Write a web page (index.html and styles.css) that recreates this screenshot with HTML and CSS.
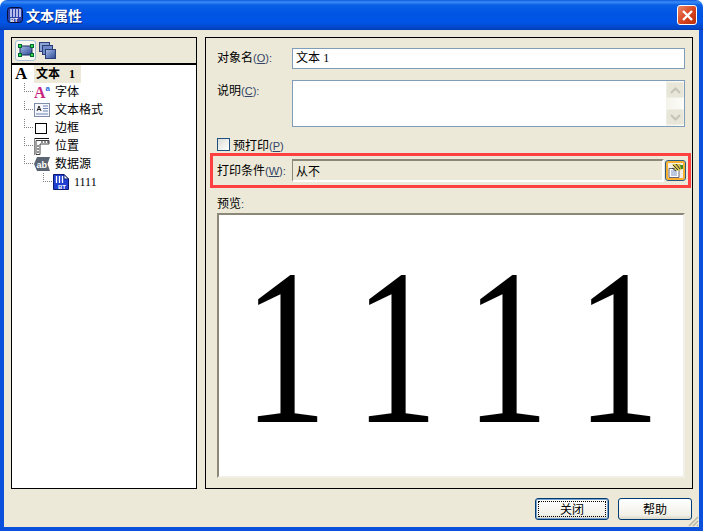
FILE: index.html
```html
<!DOCTYPE html>
<html lang="zh-CN">
<head>
    <meta charset="UTF-8">
    <title>文本属性</title>
    <link rel="stylesheet" href="styles.css">
</head>
<body>
<div class="window">
    <div class="titlebar">
        <svg class="app-icon" width="16" height="16" viewBox="0 0 16 16">
            <rect x="0.5" y="0.5" width="15" height="15" rx="3" fill="#2a3fa8" stroke="#0a0f3a"/>
            <path d="M4 2v8M7 2v8M10 2v8M13 2v8" stroke="#dfe4ff" stroke-width="1.5"/>
            <text x="3" y="15" class="bt-text">BT</text>
        </svg>
        <span class="title-text">文本属性</span>
        <div class="close-btn">
            <svg width="13" height="13" viewBox="0 0 13 13"><path d="M2 2l9 9M11 2l-9 9" stroke="#fff" stroke-width="2.4"/></svg>
        </div>
    </div>

    <div class="client">
        <div class="panels">
            <!-- arbol de propiedades -->
            <div class="panel tree-panel">
                <div class="toolbar">
                    <div class="tool-btn active">
                        <svg width="16" height="13" viewBox="0 0 16 13">
                            <defs>
                                <linearGradient id="blueGrad" x1="0" y1="0" x2="1" y2="1">
                                    <stop offset="0" stop-color="#a9bde6"/>
                                    <stop offset="1" stop-color="#2b4a96"/>
                                </linearGradient>
                            </defs>
                            <rect x="2" y="2" width="12" height="9" fill="url(#blueGrad)" stroke="#1a2a5a"/>
                            <rect x="0.5" y="0.5" width="3" height="3" fill="#2fe04a" stroke="#063"/>
                            <rect x="12.500" y="0.5" width="3" height="3" fill="#2fe04a" stroke="#063"/>
                            <rect x="0.5" y="9.500" width="3" height="3" fill="#2fe04a" stroke="#063"/>
                            <rect x="12.500" y="9.500" width="3" height="3" fill="#2fe04a" stroke="#063"/>
                        </svg>
                    </div>
                    <div class="tool-btn">
                        <svg width="17" height="17" viewBox="0 0 17 17">
                            <rect x="0.5" y="0.5" width="10" height="9" fill="#8ea4d6" stroke="#2a3f78"/>
                            <rect x="3.5" y="3.5" width="10" height="9" fill="#6f8ac6" stroke="#2a3f78"/>
                            <rect x="6.5" y="7.5" width="10" height="9" fill="url(#blueGrad)" stroke="#2a3f78"/>
                        </svg>
                    </div>
                </div>
                <div class="tree">
                    <div class="node root">
                        <span class="root-icon">A</span>
                        <span class="node-label selected">文本<span class="num root-num">1</span></span>
                    </div>
                    <div class="node">
                        <span class="elbow"></span>
                        <svg class="node-icon" width="16" height="16" viewBox="0 0 16 16">
                            <text x="0" y="14" class="font-big">A</text>
                            <text x="11.600" y="7" class="font-small">a</text>
                        </svg>
                        <span class="node-label">字体</span>
                    </div>
                    <div class="node">
                        <span class="elbow"></span>
                        <svg class="node-icon" width="16" height="14" viewBox="0 0 16 14">
                            <rect x="0.5" y="0.5" width="15" height="13" fill="#f4f6fb" stroke="#7f8da8"/>
                            <path d="M2 11h12M9 3h5M9 5.5h5M9 8h5" stroke="#6d84b4"/>
                            <path d="M3 8l2-5 2 5M4 6.5h2" stroke="#222" fill="none"/>
                        </svg>
                        <span class="node-label">文本格式</span>
                    </div>
                    <div class="node">
                        <span class="elbow"></span>
                        <svg class="node-icon" width="16" height="13" viewBox="0 0 16 13">
                            <rect x="1.500" y="1.500" width="11" height="10" fill="#fff" stroke="#000"/>
                        </svg>
                        <span class="node-label">边框</span>
                    </div>
                    <div class="node">
                        <span class="elbow"></span>
                        <svg class="node-icon" width="16" height="17" viewBox="0 0 16 17">
                            <path d="M0 0.5h15" stroke="#111"/>
                            <path d="M0.5 0v17" stroke="#8a8a8a"/>
                            <path d="M2 2.500h13v3.500h-9v10.500h-4z" fill="#fff" stroke="#444"/>
                            <path d="M8 3v2M11 3v2M14 3v2M3 8h2M3 11h2M3 14h2" stroke="#222"/>
                        </svg>
                        <span class="node-label">位置</span>
                    </div>
                    <div class="node">
                        <span class="elbow"></span>
                        <svg class="node-icon" width="16" height="14" viewBox="0 0 16 14">
                            <path d="M3 0H16L13.5 7 16 14H3L0 7Z" fill="#5a6472"/>
                            <text x="2.5" y="11" class="ab-text">ab</text>
                        </svg>
                        <span class="node-label">数据源</span>
                    </div>
                    <div class="node sub">
                        <span class="elbow"></span>
                        <svg class="node-icon" width="16" height="16" viewBox="0 0 16 16">
                            <path d="M0.5 0.5H11L15.5 5V15.5H0.5Z" fill="#1f3fd0" stroke="#0b1a70"/>
                            <path d="M11 0.5V5H15.5Z" fill="#fff" stroke="#0b1a70"/>
                            <path d="M3.5 2v7M6.5 2v7M9.5 2v7" stroke="#fff" stroke-width="1.3"/>
                            <text x="5" y="15" class="bt-text">BT</text>
                        </svg>
                        <span class="node-label num">1111</span>
                    </div>
                </div>
            </div>

            <!-- propiedades -->
            <div class="panel props-panel">
                <div class="form-row name-row">
                    <label class="field-label">对象名<span class="acc">(<u>O</u>):</span></label>
                    <div class="input name-input">文本 <span class="num">1</span></div>
                </div>
                <div class="form-row memo-row">
                    <label class="field-label memo-label">说明<span class="acc">(<u>C</u>):</span></label>
                    <div class="input memo-input">
                        <div class="scrollbar">
                            <div class="scroll-btn">
                                <svg width="11" height="7" viewBox="0 0 11 7"><path d="M1 6l4.500-4.500L10 6" fill="none" stroke="#c4c4b8" stroke-width="2"/></svg>
                            </div>
                            <div class="scroll-btn">
                                <svg width="11" height="7" viewBox="0 0 11 7"><path d="M1 1l4.500 4.500L10 1" fill="none" stroke="#c4c4b8" stroke-width="2"/></svg>
                            </div>
                        </div>
                    </div>
                </div>
                <div class="check-row">
                    <span class="checkbox"></span>
                    <span>预打印<span class="acc">(<u>P</u>)</span></span>
                </div>
                <div class="condition-box">
                    <label class="field-label cond-label">打印条件<span class="acc">(<u>W</u>):</span></label>
                    <div class="readonly-field">从不</div>
                    <div class="edit-btn">
                        <svg width="17" height="16" viewBox="0 0 17 16">
                            <path d="M2 5.500h10v9H2z" fill="#fff" stroke="#667"/>
                            <path d="M4 8h6M4 10h6M4 12h6" stroke="#7a93c4"/>
                            <path d="M5 1h8l3 3-2 3-5 1z" fill="#d8c24a"/>
                            <path d="M6 2l5 5M9 1l4 5M5 5l4 3" stroke="#333"/>
                            <path d="M13 2h3v4h-2z" fill="#3a8a2e"/>
                        </svg>
                    </div>
                </div>
                <div class="preview-label">预览<span class="acc">:</span></div>
                <div class="preview"><span class="preview-text">1111</span></div>
            </div>
        </div>

        <div class="button-row">
            <div class="btn default"><span class="btn-focus">关闭</span></div>
            <div class="btn"><span class="btn-focus plain">帮助</span></div>
        </div>
        <svg class="grip" width="11" height="11" viewBox="0 0 11 11">
            <path d="M10 1L1 10M10 5L5 10M10 9L9 10" stroke="#b5b2a0" stroke-width="1.4"/>
        </svg>
    </div>
</div>
</body>
</html>
```

FILE: styles.css
```css
html, body {
    margin: 0;
    padding: 0;
}

body {
    width: 703px;
    height: 531px;
    overflow: hidden;
    font-family: "Liberation Sans", "Noto Sans CJK SC", sans-serif;
    font-size: 12px;
    color: #000;
}

.window {
    display: flex;
    flex-direction: column;
    height: 531px;
}

/* barra de titulo */
.titlebar {
    height: 30px;
    flex: none;
    display: flex;
    align-items: center;
    padding: 0 6px 0 7px;
    box-sizing: border-box;
    border-radius: 7px 7px 0 0;
    background: linear-gradient(#0a58e0 0, #3c8cf6 2px, #0a5fe6 5px, #0054e3 14px, #0055e6 22px, #0346c8 28px, #003bb0 30px);
}

.app-icon {
    flex: none;
}

.bt-text {
    font-family: "Liberation Sans", sans-serif;
    font-size: 6px;
    font-weight: bold;
    fill: #fff;
}

.title-text {
    margin-left: 3px;
    flex: 1;
    color: #fff;
    font-size: 14px;
    font-weight: bold;
    text-shadow: 1px 1px 0 #0a2a80;
}

.close-btn {
    width: 20px;
    height: 20px;
    box-sizing: border-box;
    display: flex;
    align-items: center;
    justify-content: center;
    border: 1px solid #fff;
    border-radius: 3px;
    background: linear-gradient(135deg, #e8886a, #d8421e 55%, #b8300f);
}

.client {
    flex: 1;
    position: relative;
    display: flex;
    flex-direction: column;
    background: #ece9d8;
    border: 4px solid #0a50dc;
    border-top: none;
    padding: 7px 6px 0 7px;
    min-height: 0;
}

.panels {
    display: flex;
    gap: 8px;
    height: 452px;
    flex: none;
}

.panel {
    box-sizing: border-box;
    border: 1px solid #000;
}

/* panel izquierdo */
.tree-panel {
    width: 186px;
    display: flex;
    flex-direction: column;
}

.toolbar {
    height: 25px;
    flex: none;
    display: flex;
    align-items: center;
    gap: 3px;
    padding-left: 3px;
    border-bottom: 2px solid #000;
}

.tool-btn {
    display: flex;
    align-items: center;
    justify-content: center;
    height: 21px;
}

.tool-btn.active {
    width: 21px;
    box-sizing: border-box;
    border: 1px solid #a8c0d8;
    border-radius: 3px;
    background: #f8f7f0;
}

.tree {
    flex: 1;
    background: #fff;
}

.node {
    height: 18px;
    display: flex;
    align-items: center;
    padding-left: 12px;
}

.node.root {
    padding-left: 3px;
}

.node.sub {
    padding-left: 31px;
}

.elbow {
    width: 9px;
    height: 9px;
    flex: none;
    align-self: flex-start;
    box-sizing: border-box;
    border-left: 1px dotted #808080;
    border-bottom: 1px dotted #808080;
}

.root-icon {
    width: 19px;
    flex: none;
    font-family: "Liberation Serif", serif;
    font-size: 17px;
    font-weight: bold;
    line-height: 18px;
}

.node-icon {
    width: 16px;
    flex: none;
    margin-left: 1px;
}

.font-big {
    font-family: "Liberation Serif", serif;
    font-size: 16px;
    font-weight: bold;
    fill: #c8257e;
}

.font-small {
    font-family: "Liberation Sans", sans-serif;
    font-size: 8px;
    font-weight: bold;
    fill: #2a6ad8;
}

.ab-text {
    font-family: "Liberation Sans", sans-serif;
    font-size: 9px;
    font-weight: bold;
    fill: #fff;
}

.node-label {
    margin-left: 5px;
    line-height: 18px;
    white-space: nowrap;
}

.node-label.selected {
    margin-left: 0;
    padding: 0 6px 0 2px;
    font-weight: bold;
    background: #ece9d8;
}

.num {
    font-family: "Liberation Serif", serif;
}

.root-num {
    margin-left: 9px;
}

/* panel derecho */
.props-panel {
    width: 488px;
    padding-top: 10px;
}

.form-row {
    display: flex;
    padding-left: 11px;
    padding-right: 7px;
}

.field-label {
    width: 75px;
    flex: none;
    line-height: 20px;
    white-space: nowrap;
}

.acc {
    font-size: 11px;
    color: #334466;
}

.input {
    flex: 1;
    box-sizing: border-box;
    border: 1px solid #7f9db9;
    background: #fff;
}

.name-input {
    height: 21px;
    line-height: 19px;
    padding-left: 3px;
}

.memo-row {
    margin-top: 11px;
}

.memo-label {
    padding-top: 1px;
}

.memo-input {
    height: 47px;
    display: flex;
    justify-content: flex-end;
}

.scrollbar {
    width: 18px;
    display: flex;
    flex-direction: column;
    justify-content: space-between;
    padding: 1px 0;
    box-sizing: border-box;
    background: linear-gradient(90deg, #f4f3ea, #fdfdfa);
}

.scroll-btn {
    height: 16px;
    box-sizing: border-box;
    display: flex;
    align-items: center;
    justify-content: center;
    border: 1px solid #efeee4;
    border-radius: 2px;
    background: #e8e6d8;
}

.check-row {
    display: flex;
    align-items: center;
    gap: 3px;
    height: 14px;
    margin-top: 10px;
    padding-left: 11px;
}

.checkbox {
    width: 13px;
    height: 13px;
    box-sizing: border-box;
    border: 1px solid #1c5180;
    background: linear-gradient(135deg, #dcdcd5, #fff);
}

.condition-box {
    display: flex;
    align-items: center;
    box-sizing: border-box;
    width: 481px;
    height: 35px;
    margin: 2px 0 0 4px;
    padding-left: 4px;
    border: 3px solid #ff4040;
}

.cond-label {
    padding-top: 1px;
}

.readonly-field {
    width: 372px;
    height: 23px;
    flex: none;
    box-sizing: border-box;
    padding-left: 3px;
    line-height: 22px;
    border: 2px solid;
    border-color: #8b8878 #fff #fff #8b8878;
    border-left-width: 1px;
}

.edit-btn {
    width: 21px;
    height: 21px;
    flex: none;
    margin-left: 1px;
    box-sizing: border-box;
    display: flex;
    align-items: center;
    justify-content: center;
    border: 1px solid #2a5a80;
    border-radius: 3px;
    background: #f4f1e4;
    box-shadow: inset 0 0 0 2px #f8b030;
}

.preview-label {
    height: 18px;
    margin-top: 7px;
    padding-left: 11px;
    line-height: 18px;
}

.preview {
    width: 468px;
    height: 265px;
    margin-left: 11px;
    padding: 2px 0 0 27px;
    box-sizing: border-box;
    display: flex;
    align-items: center;
    justify-content: center;
    background: #fff;
    border: 2px solid;
    border-color: #8b8878 #f2f0e6 #f2f0e6 #8b8878;
    overflow: hidden;
}

/* digitos mas estrechos, el paso sigue siendo 111px */
.preview-text {
    flex: none;
    font-family: "Liberation Serif", serif;
    font-size: 222px;
    font-kerning: none;
    letter-spacing: 35px;
    line-height: 1;
    transform: scaleX(0.76);
}

/* botones */
.button-row {
    display: flex;
    justify-content: flex-end;
    gap: 9px;
    margin: 9px 1px 0 0;
}

.btn {
    width: 74px;
    height: 22px;
    box-sizing: border-box;
    padding: 2px;
    border: 1px solid #003c74;
    border-radius: 3px;
    background: linear-gradient(#fff, #f2f1e8 80%, #dcd8c8);
}

.btn.default {
    box-shadow: inset 0 0 0 1px #7da2ce;
}

.btn-focus {
    display: block;
    height: 100%;
    line-height: 16px;
    text-align: center;
    box-sizing: border-box;
    border: 1px dotted #000;
}

.btn-focus.plain {
    border-color: transparent;
}

.grip {
    position: absolute;
    right: 0;
    bottom: 0;
}
```
